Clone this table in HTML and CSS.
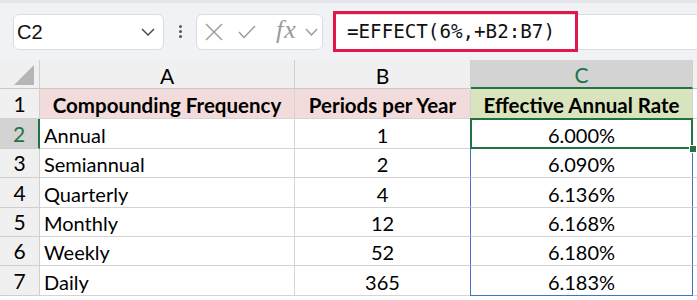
FILE: index.html
```html
<!DOCTYPE html>
<html>
<head>
<meta charset="utf-8">
<link rel="stylesheet" href="styles.css">
</head>
<body>
<div class="toolbar">
  <div class="namebox">
    <span class="name">C2</span>
    <svg class="chev" width="14" height="8" viewBox="0 0 14 8"><path d="M1 1 L7 7 L13 1" fill="none" stroke="#5a4a42" stroke-width="1.5"/></svg>
  </div>
  <div class="dots"><i></i><i></i><i></i></div>
  <div class="fxbox">
    <svg width="18" height="18" viewBox="0 0 18 18"><path d="M1 1 L17 17 M17 1 L1 17" stroke="#9a9a9a" stroke-width="1.4" fill="none"/></svg>
    <svg width="18" height="14" viewBox="0 0 18 14"><path d="M1 7 L6 12.5 L17 1" stroke="#9a9a9a" stroke-width="1.4" fill="none"/></svg>
    <span class="fx">fx</span>
    <svg width="13" height="8" viewBox="0 0 13 8"><path d="M1 1 L6.5 7 L12 1" fill="none" stroke="#9a9a9a" stroke-width="1.4"/></svg>
  </div>
  <div class="formula">
    <span class="ftext">=EFFECT(6%,+B2:B7)</span>
  </div>
</div>
<div class="grid">
  <div class="hd corner"><svg width="20" height="20" viewBox="0 0 20 20"><path d="M20 0 L20 20 L0 20 Z" fill="#b5b5b5"/></svg></div>
  <div class="hd col">A</div>
  <div class="hd col">B</div>
  <div class="hd col active">C</div>
  <div class="hd col last"></div>

  <div class="rh r30">1</div>
  <div class="c pink b ctr">Compounding Frequency</div>
  <div class="c pink b ctr">Periods per Year</div>
  <div class="c green b ctr">Effective Annual Rate</div>
  <div class="c last"></div>

  <div class="rh r30 active">2</div>
  <div class="c">Annual</div>
  <div class="c ctr">1</div>
  <div class="c ctr sel">6.000%</div>
  <div class="c last"></div>

  <div class="rh r29">3</div>
  <div class="c">Semiannual</div>
  <div class="c ctr">2</div>
  <div class="c ctr blue">6.090%</div>
  <div class="c last"></div>

  <div class="rh r30">4</div>
  <div class="c">Quarterly</div>
  <div class="c ctr">4</div>
  <div class="c ctr blue">6.136%</div>
  <div class="c last"></div>

  <div class="rh r29">5</div>
  <div class="c">Monthly</div>
  <div class="c ctr">12</div>
  <div class="c ctr blue">6.168%</div>
  <div class="c last"></div>

  <div class="rh r29">6</div>
  <div class="c">Weekly</div>
  <div class="c ctr">52</div>
  <div class="c ctr blue">6.180%</div>
  <div class="c last"></div>

  <div class="rh r30">7</div>
  <div class="c">Daily</div>
  <div class="c ctr">365</div>
  <div class="c ctr blue bluebot">6.183%</div>
  <div class="c last"></div>
</div>
</body>
</html>
```

FILE: styles.css
```css
html, body {
  margin: 0;
  padding: 0;
  background: #ffffff;
  width: 697px;
  height: 300px;
  overflow: hidden;
}
body {
  font-family: Lato, "Open Sans", sans-serif;
  color: #000;
}
.toolbar {
  height: 57px;
  background: #f0f2f5;
  border-top: 3px solid #e3e5e8;
  display: flex;
  align-items: center;
  padding-left: 13px;
  box-sizing: content-box;
}
.namebox {
  width: 151px;
  height: 36px;
  box-sizing: border-box;
  background: #fff;
  border: 1px solid #dadcdf;
  border-radius: 6px;
  display: flex;
  align-items: center;
  justify-content: space-between;
  padding: 0 8px 0 3px;
  margin-top: 1px;
}
.name {
  font-family: "Liberation Sans", Arial, sans-serif;
  font-size: 20px;
  color: #111;
}
.dots {
  width: 32px;
  display: flex;
  flex-direction: column;
  align-items: center;
  gap: 2px;
}
.dots i {
  width: 3px;
  height: 3px;
  background: #555;
  border-radius: 50%;
  display: block;
}
.fxbox {
  width: 127px;
  height: 36px;
  box-sizing: border-box;
  background: #fff;
  border: 1px solid #dadcdf;
  border-radius: 6px;
  display: flex;
  align-items: center;
  padding-left: 8px;
  gap: 0;
  margin-top: 1px;
}
.fxbox svg:nth-child(1) { margin-right: 15px; }
.fxbox svg:nth-child(2) { margin-right: 20px; }
.fx {
  font-family: "Liberation Serif", serif;
  font-style: italic;
  font-size: 26px;
  line-height: 1;
  color: #9a9a9a;
  margin-right: 8px;
  margin-top: -4px;
  letter-spacing: 1px;
}
.formula {
  margin-left: 10px;
  flex: 1;
  height: 36px;
  margin-top: 1px;
  background: #fff;
  border-top: 1px solid #dadcdf;
  border-bottom: 1px solid #dadcdf;
  box-sizing: border-box;
  display: flex;
  align-items: center;
}
.ftext {
  width: 245px;
  height: 41px;
  box-sizing: border-box;
  border: 3px solid #e0194a;
  display: flex;
  align-items: center;
  padding-left: 11px;
  font-family: "DejaVu Sans Mono", monospace;
  font-size: 19.2px;
  color: #111;
  margin-top: -1px;
}
.grid {
  display: grid;
  grid-template-columns: 40px 255px 176px 222px 4px;
  grid-template-rows: 29px;
  grid-auto-rows: auto;
}
.hd {
  height: 29px;
  box-sizing: border-box;
  background: #f0f0f0;
  border-right: 1px solid #d0d0d0;
  border-bottom: 1px solid #c8c8c8;
  display: flex;
  align-items: center;
  justify-content: center;
  font-size: 21px;
  line-height: 1;
}
.hd.col { padding-top: 2px; }
.corner {
  justify-content: flex-end;
  align-items: flex-end;
  padding: 0 5px 3px 0;
}
.hd.active {
  background: #d3d3d3;
  color: #217346;
  border-bottom: 2px solid #217346;
}
.hd.last { border-right: none; }
.rh {
  box-sizing: border-box;
  background: #f0f0f0;
  border-right: 1px solid #d0d0d0;
  border-bottom: 1px solid #d0d0d0;
  display: flex;
  align-items: flex-end;
  justify-content: center;
  font-size: 21px;
  line-height: 1;
  padding-bottom: 4px;
}
.rh.active {
  background: #d3d3d3;
  color: #217346;
  border-right: 2px solid #217346;
}
.r30 { height: 30px; }
.r29 { height: 29px; }
.c {
  box-sizing: border-box;
  border-right: 1px solid #d4d4d4;
  border-bottom: 1px solid #d4d4d4;
  display: flex;
  align-items: flex-end;
  padding: 0 4px 3px 4px;
  font-size: 20px;
  line-height: 1;
  white-space: nowrap;
  position: relative;
}
.c.last { border-right: none; padding: 0; }
.ctr { justify-content: center; }
.b { font-weight: 700; font-size: 20.5px; }
.pink { background: #f2dcdb; }
.green { background: #d8e4bc; }
.sel::after {
  content: "";
  position: absolute;
  left: -1px;
  top: -1px;
  right: -1px;
  bottom: -1px;
  border: 2px solid #217346;
}
.sel::before {
  content: "";
  position: absolute;
  right: -5px;
  bottom: -5px;
  width: 6px;
  height: 6px;
  background: #217346;
  border: 1px solid #fff;
  z-index: 2;
}
.blue {
  border-left: 1px solid #4472c4;
  border-right: 1px solid #4472c4;
  margin-left: -1px;
}
.bluebot { border-bottom: 1px solid #4472c4; }
```
